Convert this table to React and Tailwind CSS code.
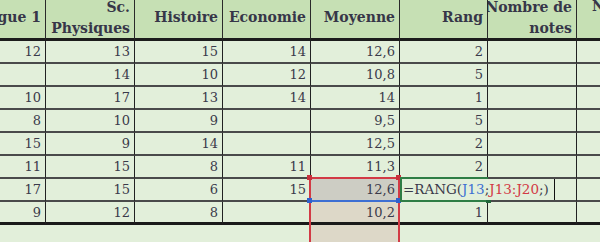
const serif = { fontFamily: '"DejaVu Serif", "Liberation Serif", serif' };

const headers = [
  { lines: ["Langue 1"] },
  { lines: ["Sc.", "Physiques"] },
  { lines: ["Histoire"] },
  { lines: ["Economie"] },
  { lines: ["Moyenne"] },
  { lines: ["Rang"] },
  { lines: ["Nombre de", "notes"] },
];

const rows = [
  ["12", "13", "15", "14", "12,6", "2", "", ""],
  ["", "14", "10", "12", "10,8", "5", "", ""],
  ["10", "17", "13", "14", "14", "1", "", ""],
  ["8", "10", "9", "", "9,5", "5", "", ""],
  ["15", "9", "14", "", "12,5", "2", "", ""],
  ["11", "15", "8", "11", "11,3", "2", "", ""],
  ["17", "15", "6", "15", "12,6", "", "", ""],
  ["9", "12", "8", "", "10,2", "1", "", ""],
];

function HeaderCell({ lines }) {
  return (
    <div className="flex h-[41px] items-center justify-end overflow-hidden whitespace-nowrap border-b-[3px] border-r border-b-[#1c1c1c] border-r-[#2a2a2a] bg-[#c6e0b4] pb-[3px] pr-[4px] text-right text-[14px] font-bold leading-[21px] text-[#363648]">
      <div className="flex flex-col items-end">
        {lines.map((l) => (
          <span key={l}>{l}</span>
        ))}
      </div>
    </div>
  );
}

function Cell({ value, rowIdx, colIdx }) {
  const last = rowIdx === rows.length - 1;
  let bg = "bg-[#e2efda]";
  if (colIdx === 4 && rowIdx === 6) bg = "bg-[#cdcdc4]";
  if (colIdx === 4 && rowIdx === 7) bg = "bg-[#ddd8c8]";
  return (
    <div
      className={`flex h-[23px] items-center justify-end overflow-hidden border-r border-r-[#222] pr-[4px] pt-[1px] text-[13px] text-[#3a3a4a] ${bg} ${
        last ? "border-b-[3px] border-b-[#1a1a1a]" : "border-b-2 border-b-[#4a4a4a]"
      }`}
    >
      {value}
    </div>
  );
}

export default function App() {
  return (
    <div className="relative h-[242px] w-[600px] overflow-hidden bg-[#e2efda]" style={serif}>
      <div className="grid w-[665px] grid-cols-[46px_89px_88px_88px_89px_88px_89px_89px]">
        {headers.map((h, i) => (
          <HeaderCell key={i} lines={h.lines} />
        ))}
        {/* last column, only the start of its heading shows */}
        <div className="h-[41px] overflow-hidden whitespace-nowrap border-b-[3px] border-b-[#1c1c1c] bg-[#c6e0b4] pl-[15px] text-[14px] font-bold leading-[21px] text-[#363648]">
          <div className="-mt-[4px]">Nombre de</div>
          <div className="pl-[40px]">retards</div>
        </div>

        {rows.map((r, ri) =>
          r.map((v, ci) => <Cell key={`${ri}-${ci}`} value={v} rowIdx={ri} colIdx={ci} />)
        )}

        {/* blank area under the table */}
        <div className="col-span-4 h-[17px]" />
        <div className="h-[17px] bg-[#ddd8c8]" />
        <div className="col-span-3 h-[17px]" />
      </div>

      {/* range J13:J20 (red) */}
      <div className="absolute left-[309px] top-[177px] h-[2px] w-[91px] bg-[#d23a45]" />
      <div className="absolute left-[309px] top-[177px] h-[65px] w-[2px] bg-[#d23a45]" />
      <div className="absolute left-[398px] top-[177px] h-[65px] w-[2px] bg-[#d23a45]" />
      <div className="absolute left-[307px] top-[175px] h-[5px] w-[5px] bg-[#c8303c]" />
      <div className="absolute left-[396px] top-[175px] h-[5px] w-[5px] bg-[#c8303c]" />

      {/* cell J13 (blue) */}
      <div className="absolute left-[309px] top-[200px] h-[2px] w-[91px] bg-[#3d6fd3]" />
      <div className="absolute left-[307px] top-[198px] h-[5px] w-[5px] bg-[#2f62cc]" />
      <div className="absolute left-[396px] top-[198px] h-[5px] w-[5px] bg-[#2f62cc]" />

      {/* active cell being edited */}
      <div className="absolute left-[400px] top-[177px] h-[25px] w-[88px] border-y-2 border-l-2 border-[#2e7d45]" />
      <div className="absolute left-[486px] top-[198px] h-[5px] w-[5px] bg-[#21663a]" />
      <div className="absolute left-[402px] top-[179px] flex h-[21px] w-[153px] items-center border-r border-r-[#111] bg-[#e2efda] pl-[1px] text-[13.5px] text-[#3a3a4a]">
        <span>=RANG(</span>
        <span className="text-[#3d6fd3]">J13</span>
        <span>;</span>
        <span className="text-[#d23a45]">J13:J20</span>
        <span>;)</span>
      </div>
    </div>
  );
}
